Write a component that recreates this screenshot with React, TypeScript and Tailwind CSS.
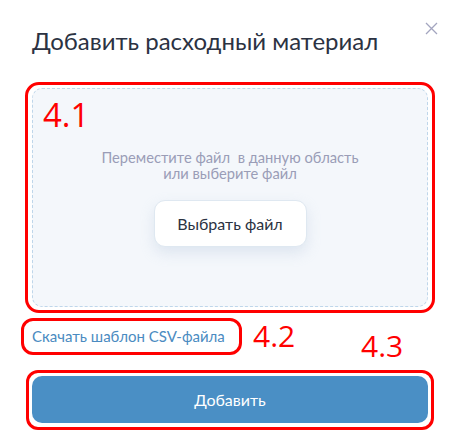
import React from "react";

export default function App() {
  return (
    <div className="relative w-[460px] h-[448px] bg-white overflow-hidden" style={{ fontFamily: "Lato, 'Noto Sans', sans-serif" }}>
      <button className="absolute left-[423px] top-[20px] w-[17px] h-[17px] flex items-center justify-center text-[#a3a5bf]">
        <svg width="13" height="13" viewBox="0 0 13 13" fill="none" stroke="currentColor" strokeWidth="1.3">
          <path d="M1 1L12 12M12 1L1 12" />
        </svg>
      </button>
      <div className="flex flex-col pl-[32px] pr-[32px] pt-[27px]">
        <h1 className="text-[24px] leading-[28px] text-[#2b3242] font-normal">Добавить расходный материал</h1>
        <div className="relative mt-[33px]">
          <div className="absolute -left-[7px] -right-[7px] -top-[6px] -bottom-[6px] border-[3px] border-[#ff0000] rounded-[14px] pointer-events-none" />
          <span className="absolute left-[11px] top-[7px] text-[33px] leading-[40px] text-[#ff0000]" style={{ fontFamily: "'Open Sans', sans-serif" }}>4.1</span>
          <div className="h-[219px] bg-[#f4f7fb] border border-dashed border-[#bfd6ea] rounded-[10px] flex flex-col items-center pt-[60px]">
            <p className="text-[14.7px] leading-[16px] text-[#9a9db7] text-center whitespace-pre">{"Переместите файл  в данную область\nили выберите файл"}</p>
            <button className="mt-[19px] w-[153px] h-[47px] bg-white border border-[#dfe8f1] rounded-[11px] shadow-[0_6px_14px_rgba(170,190,215,0.3)] text-[16px] text-[#2b3242]">Выбрать файл</button>
          </div>
        </div>
        <div className="relative mt-[11px] flex items-center">
          <div className="relative h-[37px] flex items-center">
            <div className="absolute -left-[11px] -right-[17px] top-0 bottom-0 border-[3px] border-[#ff0000] rounded-[12px]" />
            <span className="text-[15px] text-[#4a8bc1]">Скачать шаблон CSV-файла</span>
          </div>
          <span className="absolute left-[221px] top-[0px] text-[30px] leading-[36px] text-[#ff0000]" style={{ fontFamily: "'Open Sans', sans-serif" }}>4.2</span>
          <span className="absolute left-[329px] top-[10px] text-[30px] leading-[36px] text-[#ff0000]" style={{ fontFamily: "'Open Sans', sans-serif" }}>4.3</span>
        </div>
        <div className="relative mt-[21px]">
          <div className="absolute -left-[6px] -right-[6px] -top-[6px] -bottom-[7px] border-[3px] border-[#ff0000] rounded-[12px]" />
          <button className="w-full h-[47px] bg-[#4a8fc5] rounded-[10px] text-white text-[16px]">Добавить</button>
        </div>
      </div>
    </div>
  );
}
